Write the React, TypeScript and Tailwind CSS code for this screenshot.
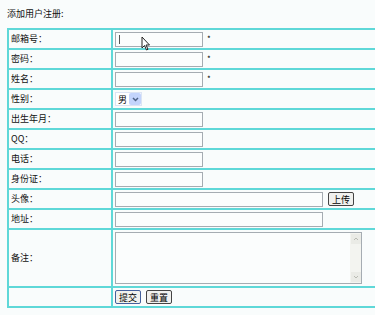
import React from "react";

const cjk = { fontFamily: '"Noto Sans CJK SC", "Liberation Sans", sans-serif' };

function TextBox({ width, caret }: { width: string; caret?: boolean }) {
  return (
    <div className={`relative h-[15px] ${width} border border-[#a5acb2] bg-[#fbfdfd]`}>
      {caret && <div className="absolute left-[3px] top-[2px] h-[9px] w-px bg-[#555]" />}
    </div>
  );
}

function Star() {
  return <span className="ml-[4px] text-[8px] leading-none text-black">*</span>;
}

function Btn({ label, blue }: { label: string; blue?: boolean }) {
  return (
    <div
      className={`flex h-[14px] items-center rounded-[2px] border px-[3px] text-[9px] leading-none text-black bg-[#f1f1ee] ${
        blue ? "border-[#44609c]" : "border-[#444]"
      }`}
    >
      {label}
    </div>
  );
}

function Row({
  label,
  children,
  h = "h-[18px]",
}: {
  label: string;
  children?: React.ReactNode;
  h?: string;
}) {
  return (
    <div className="flex border-b-2 border-[#5fd8d8]">
      <div className={`${h} w-[104px] shrink-0 flex items-center pl-[2px] border-r-2 border-[#5fd8d8] text-[9px] text-[#111]`}>
        {label}
      </div>
      <div className={`${h} flex-1 flex items-center pl-[2px]`}>{children}</div>
    </div>
  );
}

export default function App() {
  return (
    <div className="relative h-[315px] w-[375px] overflow-hidden bg-[#f9fcfc]" style={cjk}>
      <div className="pl-[7px] pt-[8px] h-[28px] text-[9px] leading-[12px] text-[#111]">添加用户注册:</div>

      <div className="ml-[7px] w-[400px] border-l-2 border-t-2 border-[#5fd8d8]">
        <Row label="邮箱号：">
          <TextBox width="w-[88px]" caret />
          <Star />
        </Row>
        <Row label="密码：">
          <TextBox width="w-[88px]" />
          <Star />
        </Row>
        <Row label="姓名：">
          <TextBox width="w-[88px]" />
          <Star />
        </Row>
        <Row label="性别：">
          <div className="flex h-[14px] w-[27px] items-center border border-[#dbe4f4] bg-white">
            <span className="pl-[2px] text-[9px] leading-none text-black">男</span>
            <div className="ml-auto flex h-[12px] w-[12px] items-center justify-center rounded-[2px] bg-[#c3d4fc]">
              <svg width="7" height="5" viewBox="0 0 7 5">
                <path d="M1 1 L3.5 3.5 L6 1" stroke="#4d6185" strokeWidth="1.5" fill="none" />
              </svg>
            </div>
          </div>
        </Row>
        <Row label="出生年月：">
          <TextBox width="w-[88px]" />
        </Row>
        <Row label="QQ：">
          <TextBox width="w-[88px]" />
        </Row>
        <Row label="电话：">
          <TextBox width="w-[88px]" />
        </Row>
        <Row label="身份证：">
          <TextBox width="w-[88px]" />
        </Row>
        <Row label="头像：">
          <TextBox width="w-[208px]" />
          <div className="ml-[5px]">
            <Btn label="上传" />
          </div>
        </Row>
        <Row label="地址：">
          <TextBox width="w-[208px]" />
        </Row>
        <Row label="备注：" h="h-[56px]">
          <div className="flex h-[52px] w-[247px] border border-[#a5acb2] bg-[#fbfdfd]">
            <div className="flex-1" />
            <div className="flex w-[11px] flex-col items-center justify-between bg-[#f3f4f0] py-[1px]">
              <div className="flex h-[10px] w-[10px] items-center justify-center bg-[#eaebe6]">
                <svg width="6" height="4" viewBox="0 0 6 4">
                  <path d="M1 3 L3 1 L5 3" stroke="#b9bbb3" strokeWidth="1" fill="none" />
                </svg>
              </div>
              <div className="flex h-[10px] w-[10px] items-center justify-center bg-[#eaebe6]">
                <svg width="6" height="4" viewBox="0 0 6 4">
                  <path d="M1 1 L3 3 L5 1" stroke="#b9bbb3" strokeWidth="1" fill="none" />
                </svg>
              </div>
            </div>
          </div>
        </Row>
        <Row label="">
          <div className="flex gap-[5px]">
            <Btn label="提交" blue />
            <Btn label="重置" />
          </div>
        </Row>
      </div>

      {/* mouse pointer */}
      <svg className="absolute left-[141px] top-[36px]" width="11" height="16" viewBox="0 0 11 16">
        <path d="M1 1 L1 12 L3.5 9.5 L5.5 14 L7 13.3 L5 9 L8.5 9 Z" fill="#fff" stroke="#222" strokeWidth="1" />
      </svg>
    </div>
  );
}
